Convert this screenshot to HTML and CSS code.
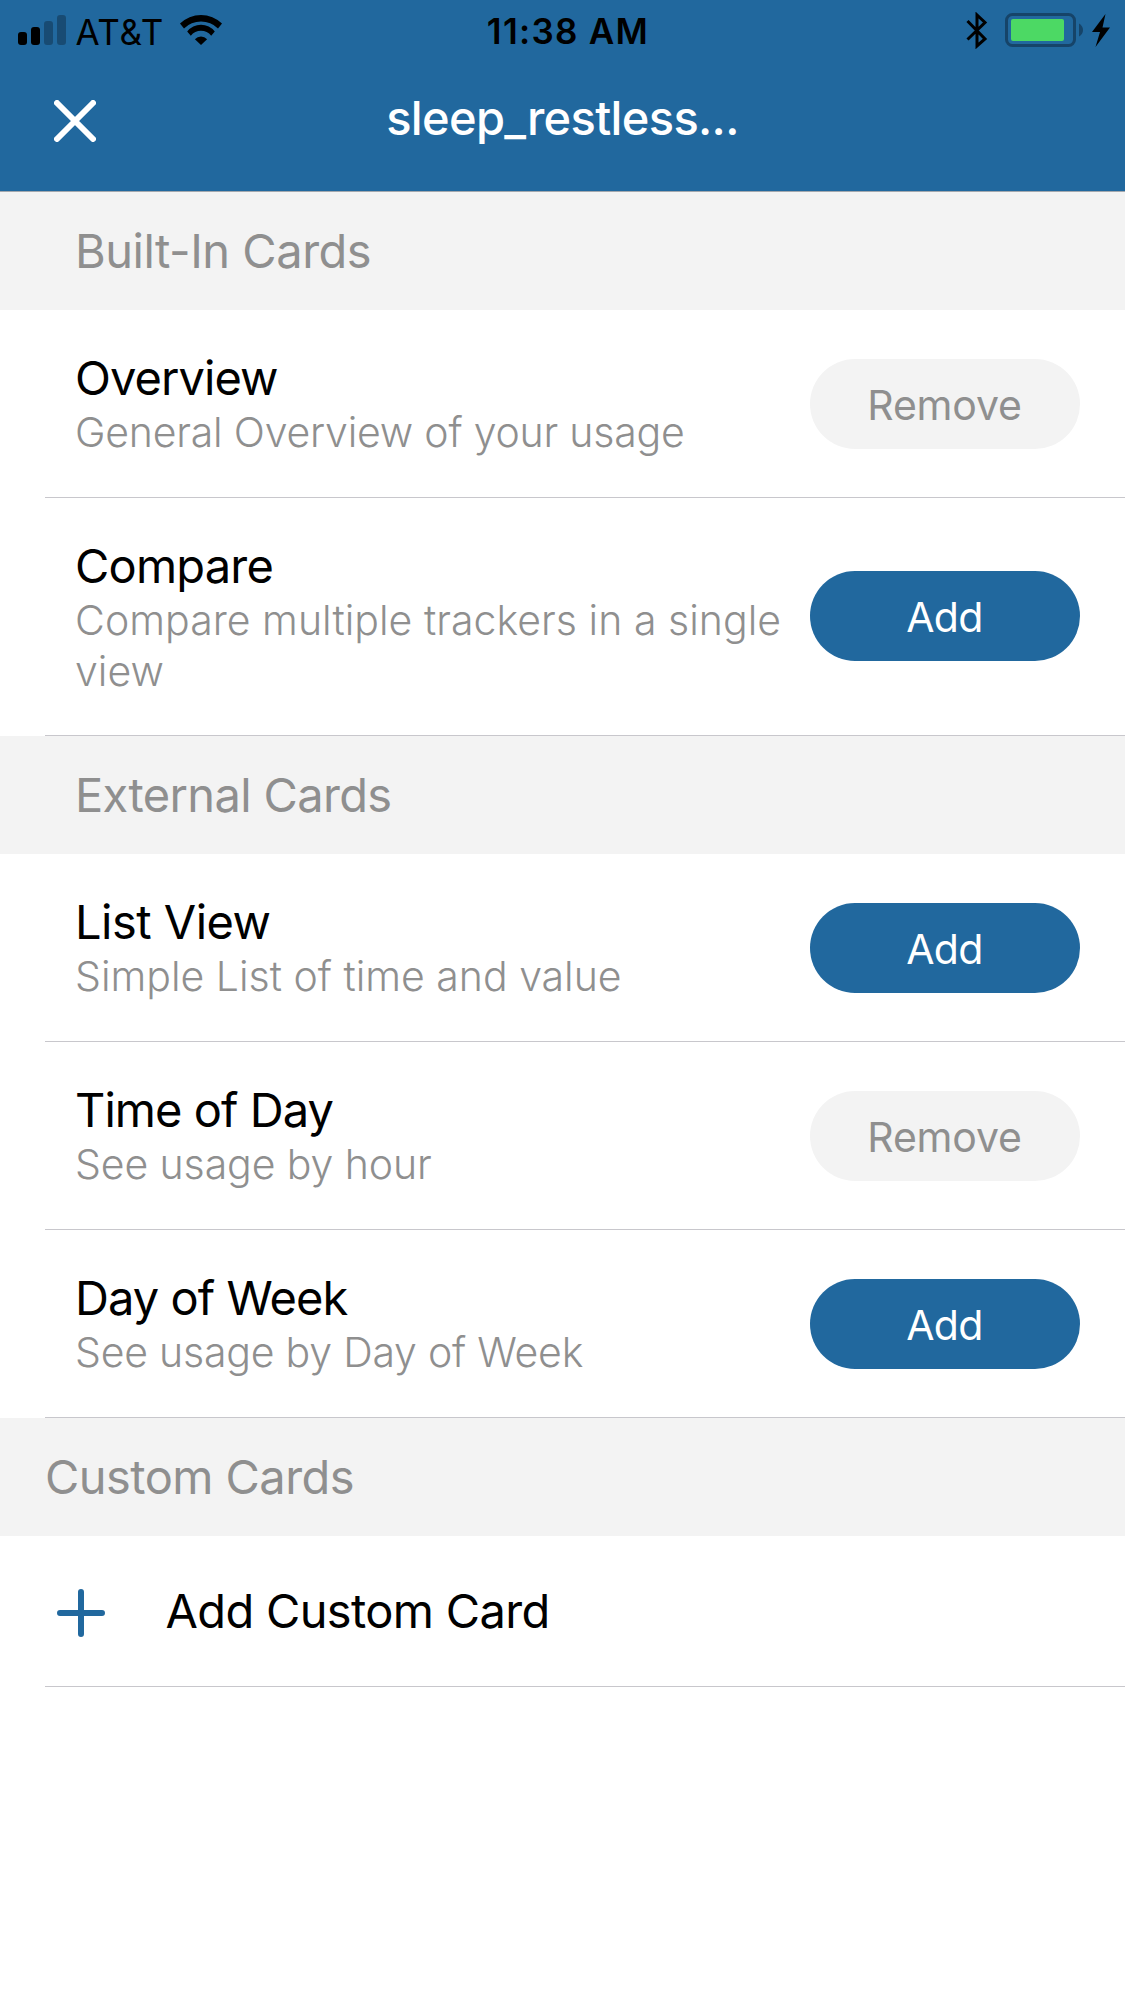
FILE: index.html
```
<!DOCTYPE html>
<html lang="en">
<head>
<meta charset="utf-8">
<title>Cards</title>
<link rel="stylesheet" href="styles.css">
</head>
<body>
<header class="top">
  <div class="status">
    <div class="status-left">
      <svg class="signal" width="48" height="30" viewBox="0 0 48 30">
        <rect x="0" y="17" width="9" height="13" rx="3"/>
        <rect x="13" y="12" width="9" height="18" rx="3"/>
        <rect class="off" x="26" y="6" width="9" height="24" rx="3"/>
        <rect class="off" x="39" y="0" width="9" height="30" rx="3"/>
      </svg>
      <span class="carrier">AT&amp;T</span>
      <svg class="wifi" width="42" height="30" viewBox="0 0 42 30">
        <path d="M0 8.600A30 30 0 0 1 42 8.600L38 13.400A24.500 24.500 0 0 0 4 13.400Z"/>
        <path d="M7.200 16.500A17.500 17.500 0 0 1 34.800 16.500L31.200 20.700A13 13 0 0 0 10.800 20.700Z"/>
        <path d="M14.900 24.200A8.500 8.500 0 0 1 27.100 24.200L21 30Z"/>
      </svg>
    </div>
    <time class="clock">11:38 AM</time>
    <div class="status-right">
      <svg class="bluetooth" width="22" height="37" viewBox="0 0 22 37">
        <path d="M1.500 9 19 27 11 34V3L19 10.500 1.500 27.500"/>
      </svg>
      <svg class="battery" width="78" height="34" viewBox="0 0 78 34">
        <rect class="shell" x="1.500" y="1.500" width="68" height="31" rx="6"/>
        <rect class="charge" x="6" y="6" width="53" height="22" rx="2"/>
        <path class="nub" d="M74 10.500Q78 13 78 17T74 23.500Z"/>
      </svg>
      <svg class="bolt" width="18" height="33" viewBox="0 0 18 33">
        <path d="M13.500 0 0 18H8L3.500 33 18 13.500H10.500Z"/>
      </svg>
    </div>
  </div>
  <nav class="nav">
    <svg class="close" width="42" height="42" viewBox="0 0 42 42"><path d="M3 3 39 39M39 3 3 39"/></svg>
    <h1 class="nav-title">sleep_restless...</h1>
  </nav>
</header>
<main>
  <h2 class="section section--first">Built-In Cards</h2>
  <div class="row">
    <div class="text"><div class="name">Overview</div><div class="desc desc--snug">General Overview of your usage</div></div>
    <button class="btn btn--remove">Remove</button>
  </div>
  <div class="row row--tall">
    <div class="text"><div class="name name--wide">Compare</div><div class="desc desc--open">Compare multiple trackers in a single view</div></div>
    <button class="btn btn--add">Add</button>
  </div>
  <h2 class="section">External Cards</h2>
  <div class="row">
    <div class="text"><div class="name name--loose">List View</div><div class="desc">Simple List of time and value</div></div>
    <button class="btn btn--add">Add</button>
  </div>
  <div class="row">
    <div class="text"><div class="name">Time of Day</div><div class="desc desc--near">See usage by hour</div></div>
    <button class="btn btn--remove">Remove</button>
  </div>
  <div class="row">
    <div class="text"><div class="name">Day of Week</div><div class="desc desc--snug">See usage by Day of Week</div></div>
    <button class="btn btn--add">Add</button>
  </div>
  <h2 class="section section--outer">Custom Cards</h2>
  <div class="row row--custom">
    <svg class="plus" width="48" height="48" viewBox="0 0 48 48"><path d="M24 3V45M3 24H45"/></svg>
    <span class="custom-label">Add Custom Card</span>
  </div>
</main>
</body>
</html>
```
FILE: styles.css
```
* { box-sizing: border-box; }
body { margin: 0; background: #fff; color: #000; font-family: Inter, "Liberation Sans", sans-serif; }
svg { display: block; flex: none; }

.top { height: 192px; background: #21689e; border-bottom: 1px solid #a3a8ae; }
.status { height: 60px; display: grid; grid-template-columns: 1fr auto 1fr; }
.status-left { display: flex; align-items: flex-start; padding: 15px 0 0 18px; }
.off { fill-opacity: .27; }
.carrier { margin-left: 9.5px; font-size: 35px; line-height: 34px; letter-spacing: .7px; }
.wifi { margin-left: 16px; }
.clock { padding-left: 11px; margin-top: 14px; font-size: 35px; font-weight: 600; line-height: 35px; letter-spacing: 1.3px; }
.status-right { display: flex; justify-content: flex-end; align-items: flex-start; padding: 12px 15px 0 0; }
.bluetooth path { fill: none; stroke: #000; stroke-width: 3; }
.battery { margin: 1px 9px 0 17px; }
.shell { fill: none; stroke: #164469; stroke-width: 3; }
.charge { fill: #4cd964; }
.nub { fill: #164469; }
.bolt { margin-top: 2px; }

.nav { height: 131px; display: grid; grid-template-columns: 96px 1fr 96px; align-items: start; }
.close { margin: 40px 0 0 54px; }
.close path { fill: none; stroke: #fff; stroke-width: 6; stroke-linecap: round; }
.nav-title { margin: 28px 0 0; text-align: center; color: #fff; font-size: 47px; font-weight: 500; line-height: 60px; letter-spacing: -.66px; }

.section { margin: 0; height: 118px; padding-left: 75px; background: #f3f3f3; color: #8f8f8f; font-size: 47px; font-weight: 400; line-height: 118px; letter-spacing: -.65px; }
.section--first { letter-spacing: -.48px; }
.section--outer { padding-left: 45px; letter-spacing: -.55px; }

.row { margin-left: 45px; height: 188px; display: flex; align-items: center; border-bottom: 1px solid #c8c7cc; }
.row--tall { height: 238px; }
.text { flex: none; align-self: flex-start; width: 745px; padding: 39px 0 0 30px; }
.name { font-size: 47px; line-height: 58px; letter-spacing: -.94px; }
.name--wide { letter-spacing: -.8px; }
.name--loose { letter-spacing: -.52px; }
.desc { color: #8f8f8f; font-size: 41px; font-weight: 300; line-height: 51px; }
.desc--open { letter-spacing: .03px; }
.desc--near { letter-spacing: -.1px; }
.desc--snug { letter-spacing: -.22px; }

.btn { width: 270px; height: 90px; margin: 0 0 0 20px; padding: 2px 1px 0 0; border: 0; border-radius: 45px; font: 400 41px/88px Inter, sans-serif; letter-spacing: -.2px; text-align: center; }
.btn--remove { background: #f3f3f3; color: #8f8f8f; }
.btn--add { background: #21689e; color: #fff; letter-spacing: -.6px; }
.row--tall .btn { margin-bottom: 2px; }

.row--custom { height: 151px; }
.plus { margin: 4px 0 0 12px; }
.plus path { fill: none; stroke: #21689e; stroke-width: 6; stroke-linecap: round; }
.custom-label { margin-left: 60.5px; font-size: 47px; line-height: 58px; letter-spacing: -.66px; }
```
